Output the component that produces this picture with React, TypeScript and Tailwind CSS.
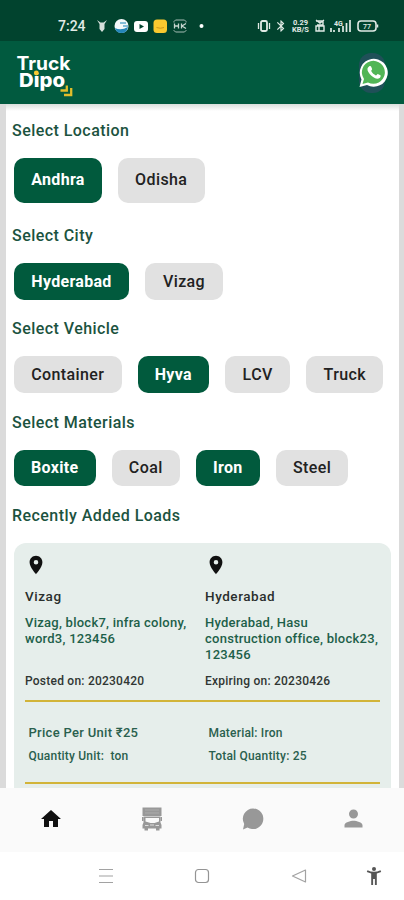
import { useState } from 'react';
import clsx from 'clsx';
import { MdBluetooth, MdHome, MdLocationOn, MdPerson } from 'react-icons/md';

type Chip = { label: string; width: string };

type FilterGroup = {
  title: string;
  chips: Chip[];
  selected: string;
  tall?: boolean;
};

const filters: FilterGroup[] = [
  {
    title: 'Select Location',
    selected: 'Andhra',
    tall: true,
    chips: [
      { label: 'Andhra', width: 'w-[88px]' },
      { label: 'Odisha', width: 'w-[86.5px]' },
    ],
  },
  {
    title: 'Select City',
    selected: 'Hyderabad',
    chips: [
      { label: 'Hyderabad', width: 'w-[115px]' },
      { label: 'Vizag', width: 'w-[78px]' },
    ],
  },
  {
    title: 'Select Vehicle',
    selected: 'Hyva',
    chips: [
      { label: 'Container', width: 'w-[107.5px]' },
      { label: 'Hyva', width: 'w-[71.5px]' },
      { label: 'LCV', width: 'w-[65.3px]' },
      { label: 'Truck', width: 'w-[77px]' },
    ],
  },
  {
    title: 'Select Materials',
    selected: 'Boxite,Iron',
    chips: [
      { label: 'Boxite', width: 'w-[81.5px]' },
      { label: 'Coal', width: 'w-[68.5px]' },
      { label: 'Iron', width: 'w-[63.7px]' },
      { label: 'Steel', width: 'w-[72.7px]' },
    ],
  },
];

function StatusBar() {
  return (
    <div className="flex h-[41px] items-center bg-[#01432e] pt-[11px] pl-[58px] text-white">
      <span className="w-[38px] text-[14px] leading-4 font-medium text-[#e3ebe7]">7:24</span>
      <svg className="h-4 w-[112px] shrink-0" viewBox="0 0 112 16">
        <path d="M1 2l3.500 2.500h3L11 2 8.500 6v5L6 14l-2.500-3V6z" fill="#d5dfdb" />
        <circle cx="25.500" cy="8" r="7" fill="#f3f8fa" />
        <path d="M19 10q6 3 13-1q-1 6-6.500 6T19 10z" fill="#2486b9" />
        <path d="M24 5h6M27 8h5" stroke="#5fa9cd" strokeWidth="1.500" />
        <rect x="38" y="3" width="14" height="11" rx="3" fill="#fff" />
        <path d="M43.500 6l4.500 2.500-4.500 2.500z" fill="#01432e" />
        <rect x="57.500" y="1.500" width="13.500" height="13.500" rx="3.500" fill="#fac92f" />
        <path d="M60.500 9.500q4 1.500 7.500 0" fill="none" stroke="#cf981c" />
        <path d="M78 4.500V3.500L79.500 2h9L90 3.500v1M78 12v.5l1.500 1.500h9l1.500-1.500V12" fill="none" stroke="#a7bdb4" />
        <path d="M78.500 5.500v5M82.500 5.500v5M78 8h4.500M85.500 5.500v5M90 5.500L86 8l4 2.500" fill="none" stroke="#c6d6cf" strokeWidth="1.300" />
        <circle cx="105.500" cy="8" r="2" fill="#fff" />
      </svg>
      <div className="ml-[49px] flex items-center text-[#e0eae5]">
        <svg className="h-4 w-[14px]" viewBox="0 0 14 16">
          <rect x="4" y="3" width="6" height="10" rx="1.500" fill="none" stroke="currentColor" strokeWidth="1.800" />
          <path d="M1.500 5v6M12.500 5v6" stroke="currentColor" strokeWidth="1.300" />
        </svg>
        <MdBluetooth className="ml-[3px] h-[14px] w-[14px]" />
        <div className="ml-[3px] flex w-[19px] flex-col text-center text-[7.5px] leading-[7px] font-bold">
          <span>0.29</span>
          <span>KB/S</span>
        </div>
        <svg className="ml-[5px] h-4 w-[64px]" viewBox="0 0 64 16">
          <path d="M1 3h7v4H2M1 2l4 3 4-3M1 13V8h8v5zM4 8v5" fill="none" stroke="currentColor" strokeWidth="1.400" />
          <path d="M16 10v4M19 12v2M24 10v4M28 8v6M31.500 5v9M35 2v12" stroke="currentColor" strokeWidth="1.700" />
          <text x="19" y="8" className="text-[7px] font-bold" fill="currentColor">4G</text>
          <rect x="43" y="3" width="18" height="10" rx="3" fill="none" stroke="currentColor" strokeWidth="1.600" />
          <path d="M62.500 6.500v3" stroke="currentColor" strokeWidth="1.500" />
          <text x="48" y="11" className="text-[7px] font-medium" fill="currentColor">77</text>
        </svg>
      </div>
    </div>
  );
}

function Logo() {
  return (
    <svg className="h-[48px] w-[62px]" viewBox="0 0 62 48" fill="#fff">
      <text x="0.500" y="21" textLength="54" lengthAdjust="spacingAndGlyphs" className="font-['Inter'] text-[18.5px] font-bold">
        Truck
      </text>
      <text x="3" y="37.500" textLength="46" lengthAdjust="spacingAndGlyphs" className="font-['Inter'] text-[19px] font-extrabold">
        Dipo
      </text>
      <circle cx="20.300" cy="24" r="2.400" fill="#fac92f" />
      <path d="M44.500 41.500h6.300v-5M48 46h7.200v-7" fill="none" stroke="#e0bd2b" strokeWidth="2.300" />
    </svg>
  );
}

function WhatsAppIcon() {
  return (
    <svg className="h-[42px] w-[32px]" viewBox="0 0 32 42">
      <rect x="2" y="1" width="26" height="40" rx="12" fill="#1f5058" />
      <path d="M2.500 35L4.500 27.500A14 14 0 1 1 10 33z" fill="#fff" />
      <path d="M5.500 32L7 27A11.500 11.500 0 1 1 11 30.500z" fill="#51b556" />
      <path
        d="M12 14.500c1-.8 1.900-.6 2.200.3l.9 2.300c.2.700-.9 1.600-.9 2 1.200 2.300 2.600 3.400 4.700 4.300.6 0 1.300-1.500 1.900-1.500l2.600 1.300c.7.500.1 2.200-.8 2.900-2.500 1.700-6-.5-8.200-2.400-2.400-2.200-4.400-5.100-3.900-7.200.2-.8.700-1.500 1.500-2z"
        fill="#fff"
      />
    </svg>
  );
}

function FilterRow({ group }: { group: FilterGroup }) {
  const [selected, setSelected] = useState(group.selected.split(','));

  const toggle = (label: string) => {
    setSelected((prev) => (prev.includes(label) ? prev.filter((l) => l !== label) : [...prev, label]));
  };

  return (
    <section className={group.tall ? 'mb-[23.5px]' : 'mb-[19.8px]'}>
      <h2 className="mb-[17px] h-5 pl-[6px] text-[16px] leading-5 font-medium tracking-[0.45px] text-[#1c5340]">
        {group.title}
      </h2>
      <div className="flex gap-4 pl-2">
        {group.chips.map((chip) => (
          <button
            key={chip.label}
            onClick={() => toggle(chip.label)}
            className={clsx(
              'shrink-0 rounded-[10px] text-center text-[16px] leading-5 whitespace-nowrap',
              chip.width,
              group.tall ? 'h-[44.5px]' : 'h-[36.5px] pt-px',
              selected.includes(chip.label)
                ? 'bg-[#015a3d] font-bold tracking-[0.3px] text-white'
                : 'bg-[#e1e1e1] font-medium tracking-[0.4px] text-[#222]'
            )}
          >
            {chip.label}
          </button>
        ))}
      </div>
    </section>
  );
}

function Stop({ city, address, date }: { city: string; address: string; date: string }) {
  return (
    <div className="flex h-[146px] w-[180px] shrink-0 flex-col">
      <MdLocationOn className="h-[22px] w-[22px] text-[#111]" />
      <h3 className="mt-[11px] h-[18px] text-[13.5px] leading-[18px] font-medium tracking-[0.55px] text-[#2a2f2d]">
        {city}
      </h3>
      <p className="mt-[10px] h-[48px] text-[13px] leading-4 font-medium tracking-[0.26px] whitespace-pre-line text-[#1d6049]">
        {address}
      </p>
      <p className="mt-[10px] text-[12px] leading-4 font-medium tracking-[0.23px] text-[#303633]">{date}</p>
    </div>
  );
}

function LoadCard() {
  return (
    <article className="mr-2 ml-2 h-[300px] rounded-[12px] bg-[#e6eeeb] px-[11px] pt-[11px]">
      <div className="flex">
        <Stop city="Vizag" address={'Vizag, block7, infra colony,\nword3, 123456'} date="Posted on: 20230420" />
        <Stop
          city="Hyderabad"
          address={'Hyderabad, Hasu\nconstruction office, block23,\n123456'}
          date="Expiring on: 20230426"
        />
      </div>
      <div className="grid h-[84px] grid-cols-[180px_1fr] content-start gap-y-[7px] border-y-2 border-[#d2b439] pt-[23px] pl-[3.500px] text-[12px] leading-4 font-medium tracking-[0.2px] text-[#2a604e]">
        <span className="text-[13px] tracking-[0.3px]">Price Per Unit ₹25</span>
        <span>Material: Iron</span>
        <span className="whitespace-pre">Quantity Unit:  ton</span>
        <span>Total Quantity: 25</span>
      </div>
    </article>
  );
}

function BottomNav() {
  return (
    <nav className="grid h-[64px] shrink-0 grid-cols-4 items-center justify-items-center bg-[#fafafa] pb-[3px] text-[#989898]">
      <MdHome className="h-6 w-6 text-[#111]" />
      <svg className="h-6 w-[22px]" viewBox="0 0 22 24" fill="currentColor">
        <path d="M1.500 0.500h19v8.500h-19z" />
        <path d="M2.500 9.500h17v6l1 2.500v3.500h-19V18l1-2.500zM4.500 11v3.500l5 1.500h4l4.500-1.500V11z" fillRule="evenodd" />
        <path d="M1 10h1.500v4H1zM19.500 10H21v4h-1.500zM3.500 21H7v2.500H3.500zM15 21h3.500v2.500H15z" />
        <path d="M4 3h14M4 6h14" stroke="#b0b0b0" strokeWidth=".8" />
        <path d="M4 18.500h3.500M14.500 18.500H18M9 18h4" stroke="#dcdcdc" strokeWidth="1" />
      </svg>
      <svg className="h-6 w-6" viewBox="0 0 24 24" fill="currentColor">
        <path d="M12 1.500A10.300 10.300 0 1 1 6.500 20.500L2 22.500 3.200 17A10.300 10.300 0 0 1 12 1.500z" />
      </svg>
      <MdPerson className="h-[27px] w-[27px]" />
    </nav>
  );
}

function SystemNav() {
  return (
    <div className="flex h-[48px] shrink-0 items-center bg-white pl-[98px]">
      <svg className="h-4 w-4" viewBox="0 0 16 16" fill="none" stroke="#a2a2a2" strokeWidth="1.200">
        <path d="M1 1.500h14M1 8h14M1 14.500h14" />
      </svg>
      <svg className="ml-[80px] h-4 w-4" viewBox="0 0 16 16" fill="none" stroke="#949494" strokeWidth="1.200">
        <rect x="1.500" y="1.500" width="13" height="13" rx="3" />
      </svg>
      <svg className="ml-[81px] h-4 w-4" viewBox="0 0 16 16" fill="none" stroke="#a2a2a2" strokeWidth="1.200">
        <path d="M14.500 2v12L1.500 8z" strokeLinejoin="round" />
      </svg>
      <svg className="ml-[59px] h-5 w-4" viewBox="0 0 16 20" fill="#555">
        <circle cx="8" cy="3" r="2" />
        <path d="M1.500 4.200q6.500 3 13 0l.7 1.800-4.400 1.500V19H8.900v-6H7.100v6H5.200V7.500L.8 6z" />
      </svg>
    </div>
  );
}

export default function App() {
  return (
    <div className="flex h-[900px] w-[404px] flex-col overflow-hidden bg-white font-['Roboto',sans-serif]">
      <StatusBar />
      <header className="flex h-[63px] shrink-0 items-center justify-between bg-[#015a3f] pr-[15px] pl-4">
        <Logo />
        <WhatsAppIcon />
      </header>
      <main className="h-[684px] shrink-0 overflow-hidden border-r-[5px] border-l-[6px] border-[#dbdbdb] bg-gradient-to-b from-[#d9dfdc] to-white to-[7px] pt-[17px]">
        {filters.map((group) => (
          <FilterRow key={group.title} group={group} />
        ))}
        <h2 className="mb-[17px] h-5 pl-[6px] text-[16px] leading-5 font-medium tracking-[0.45px] text-[#1c5340]">
          Recently Added Loads
        </h2>
        <LoadCard />
      </main>
      <BottomNav />
      <SystemNav />
    </div>
  );
}
